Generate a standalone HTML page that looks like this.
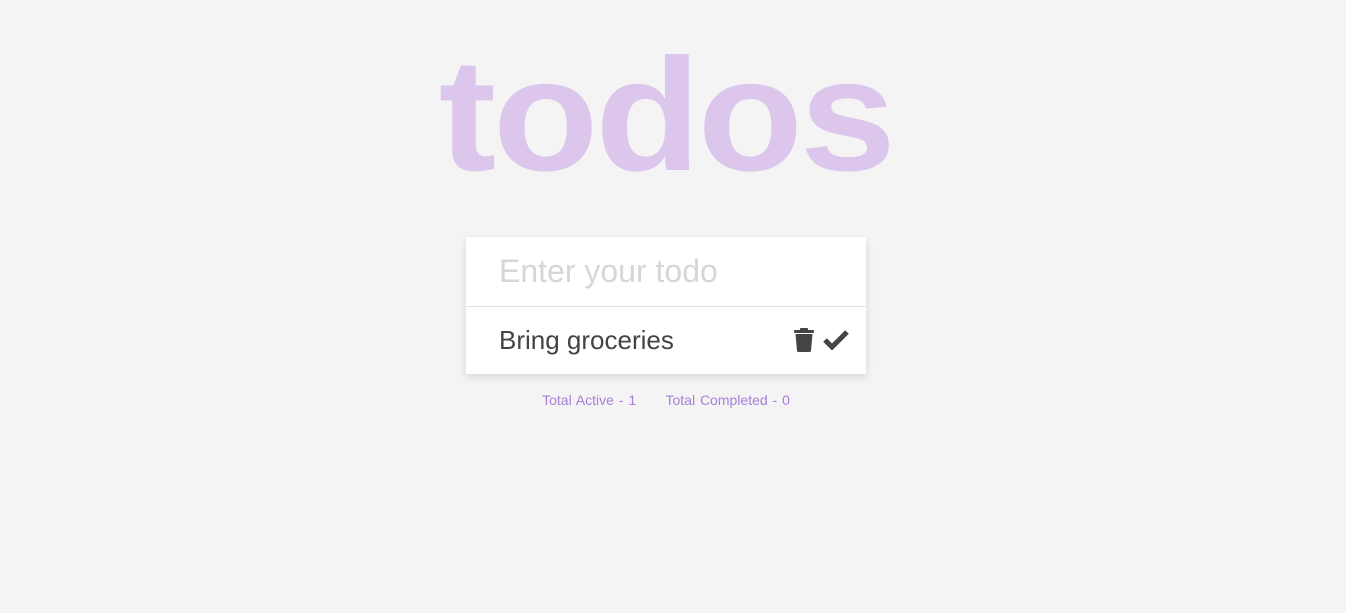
<!DOCTYPE html>
<html><head><style>
body{margin:0;background:#f4f4f4;width:1346px;height:613px;overflow:hidden;font-family:"Liberation Sans",sans-serif;position:relative}
.title{position:absolute;left:-8px;width:1346px;top:15px;text-align:center;font-size:160px;font-weight:bold;color:#dcc6ec;letter-spacing:-3px;line-height:200px;transform:scaleX(1.08);transform-origin:665px 0}
.box{position:absolute;left:466px;top:237px;width:400px;background:#fff;box-shadow:0 3px 8px rgba(0,0,0,.12)}
.inp{height:69px;border-bottom:1px solid #e2e2e2;font-size:32px;color:#d6d6d6;line-height:68px;padding-left:33px}
.item{height:67px;position:relative;font-size:26px;color:#444;line-height:67px;padding-left:33px}
.foot{position:absolute;top:392px;left:0;width:1332px;text-align:center;font-size:14px;color:#a77fd9;word-spacing:1px}
</style></head><body>
<div class="title">todos</div>
<div class="box">
<div class="inp">Enter your todo</div>
<div class="item">Bring groceries
<svg style="position:absolute;left:327px;top:21px" width="22" height="24" viewBox="0 0 22 24"><rect x="1" y="2" width="20" height="3" rx="1" fill="#444"/><rect x="7" y="0" width="8" height="3" rx="1" fill="#444"/><path d="M2.5 6h17l-1.5 16.5a1.5 1.5 0 0 1-1.5 1.5h-11a1.5 1.5 0 0 1-1.5-1.5z" fill="#444"/></svg>
<svg style="position:absolute;left:357px;top:23px" width="26" height="20" viewBox="0 0 26 20"><path d="M2 10l7 7L24 2" stroke="#444" stroke-width="5" fill="none"/></svg>
</div>
</div>
<div class="foot">Total Active - 1&nbsp;&nbsp;&nbsp;&nbsp;&nbsp;&nbsp;Total Completed - 0</div>
</body></html>
